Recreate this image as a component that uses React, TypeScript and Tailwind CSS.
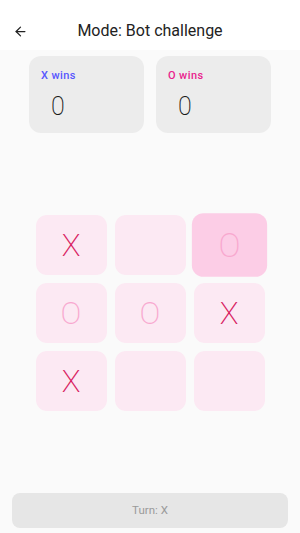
import React from "react";
import { ArrowLeft } from "lucide-react";

type Mark = "X" | "O" | "";

const board: Mark[] = ["X", "", "O", "O", "O", "X", "X", "", ""];

const Cell = ({ mark, active }: { mark: Mark; active?: boolean }) => (
    <div
        className={`w-[71px] h-[60px] rounded-[11px] flex items-center justify-center ${
            active ? "bg-[#fccde6] scale-[1.06]" : "bg-[#fce9f3]"
        }`}
    >
        {mark && (
            <span
                className={`text-[31px] font-extralight leading-none ${
                    mark === "X" ? "text-[#d81b60]" : "text-[#f8a8cf]"
                }`}
            >
                {mark}
            </span>
        )}
    </div>
);

const ScoreCard = ({ label, color }: { label: string; color: string }) => (
    <div className="w-[115px] h-[77px] rounded-[12px] bg-[#ececec] pt-[14px] pl-[12px]">
        <p className={`text-[11px] font-medium tracking-[0.4px] leading-[12px] ${color}`}>{label}</p>
        <p className="text-[25px] font-extralight leading-none text-[#1a1a1a] mt-[12px] ml-[10px]">0</p>
    </div>
);

export default function App() {
    return (
        <div
            className="w-[300px] h-[533px] bg-[#fafafa] flex flex-col"
            style={{ fontFamily: "Roboto, 'Liberation Sans', sans-serif" }}
        >
            {/* Header */}
            <div className="h-[50px] bg-white flex items-center relative shrink-0">
                <ArrowLeft className="absolute left-[13px] top-[24px] w-[15px] h-[15px] text-[#222]" strokeWidth={2} />
                <h1 className="w-full text-center text-[16px] text-[#222] pt-[12px]">Mode: Bot challenge</h1>
            </div>

            {/* Scores */}
            <div className="flex justify-center gap-[12px] mt-[6px]">
                <ScoreCard label="X wins" color="text-[#5656ff]" />
                <ScoreCard label="O wins" color="text-[#e91e8c]" />
            </div>

            {/* Board */}
            <div className="flex-1 flex items-center justify-center">
                <div className="grid grid-cols-3 gap-x-[8px] gap-y-[8px]">
                    {board.map((m, i) => (
                        <Cell key={i} mark={m} active={i === 2} />
                    ))}
                </div>
            </div>

            {/* Turn */}
            <div className="px-[12px] pb-[5px]">
                <div className="h-[35px] rounded-[8px] bg-[#e6e6e6] flex items-center justify-center">
                    <span className="text-[11.5px] text-[#9a9a9a]">Turn: X</span>
                </div>
            </div>
        </div>
    );
}
